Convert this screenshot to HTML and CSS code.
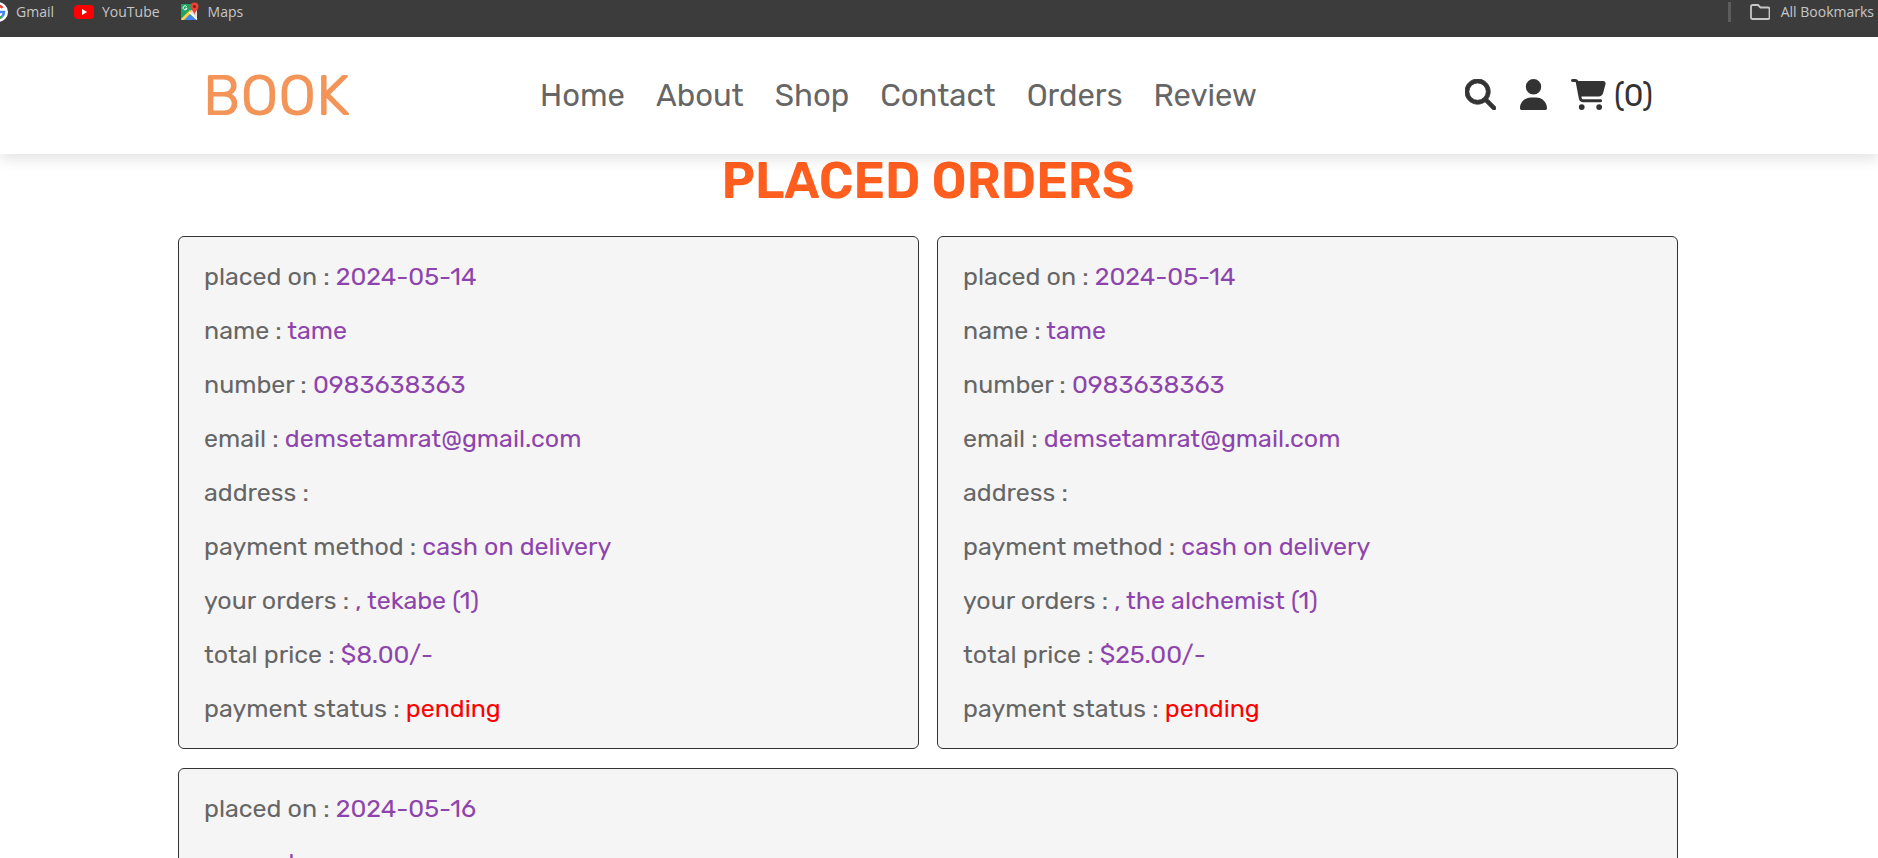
FILE: index.html
```html
<!DOCTYPE html>
<html lang="en">
<head>
<meta charset="utf-8">
<title>Orders</title>
<link rel="stylesheet" href="styles.css">
</head>
<body>
<nav class="bookmarks" aria-label="Bookmarks">
  <a class="bookmark" href="#">
    <svg class="bookmark-icon" viewBox="0 0 20 20" aria-hidden="true">
      <circle cx="10" cy="10" r="10" fill="#fff"/>
      <path d="M14.6 6A6.1 6.1 0 0 0 5 6.500" fill="none" stroke="#ea4335" stroke-width="2.600"/>
      <path d="M5 6.500a6.100 6.100 0 0 0 0 7" fill="none" stroke="#fbbc05" stroke-width="2.600"/>
      <path d="M5 13.500a6.100 6.100 0 0 0 9 1" fill="none" stroke="#34a853" stroke-width="2.600"/>
      <path d="M10 10h6a6 6 0 0 1-2 4.500" fill="none" stroke="#4285f4" stroke-width="2.600"/>
    </svg>
    <span>Gmail</span>
  </a>
  <a class="bookmark" href="#">
    <svg class="bookmark-icon" viewBox="0 0 20 20" aria-hidden="true">
      <rect y="3" width="20" height="14" rx="4" fill="#f00"/>
      <path d="M8 7l5.200 3L8 13z" fill="#fff"/>
    </svg>
    <span>YouTube</span>
  </a>
  <a class="bookmark" href="#">
    <svg class="bookmark-icon" viewBox="0 0 20 20" aria-hidden="true">
      <rect x="1" y="2" width="16" height="16" rx="1" fill="#1fa463"/>
      <path d="M9 10l8-6v13.500z" fill="#e3e3e3"/>
      <path d="M3 18l6-6 7 6z" fill="#4285f4"/>
      <path d="M1 17L10 8l2 2-8 8H2q-1 0-1-1z" fill="#ffd04b"/>
      <path d="M9.500 10.500l7.500 7" stroke="#fff" stroke-width="1.500"/>
      <path d="M14.500 13C14 9 10.500 8 10.500 4.500a4 4 0 0 1 8 0C18.500 8 15 9 14.500 13z" fill="#ea4335"/>
      <circle cx="14.500" cy="4.500" r="1.500" fill="#7b1f17"/>
      <path d="M6.700 4.700A2 2 0 1 0 7 6.300H5.300" fill="none" stroke="#fff"/>
    </svg>
    <span>Maps</span>
  </a>
  <a class="bookmark bookmark-all" href="#">
    <svg class="bookmark-icon" viewBox="0 0 20 20" fill="none" stroke="#c7c7c7" stroke-width="1.800" aria-hidden="true">
      <path d="M1 4.500a1.500 1.500 0 0 1 1.500-1.500H8l2.500 2.500h7.500A1.500 1.500 0 0 1 19.500 7v8.500A1.500 1.500 0 0 1 18 17H2.500A1.500 1.500 0 0 1 1 15.500z"/>
    </svg>
    <span>All Bookmarks</span>
  </a>
</nav>

<header class="header">
  <div class="header-inner">
    <a class="logo" href="#">BOOK</a>
    <nav class="navbar" aria-label="Main">
      <a href="#">Home</a>
      <a href="#">About</a>
      <a href="#">Shop</a>
      <a href="#">Contact</a>
      <a href="#">Orders</a>
      <a href="#">Review</a>
    </nav>
    <div class="icons">
      <a href="#" aria-label="Search"><svg class="icon icon-search" viewBox="0 0 512 512" aria-hidden="true"><path d="M416 208c0 45.900-14.900 88.300-40 122.700L502.600 457.400c12.500 12.500 12.500 32.800 0 45.300s-32.800 12.500-45.300 0L330.700 376c-34.400 25.200-76.800 40-122.700 40C93.100 416 0 322.900 0 208S93.100 0 208 0S416 93.100 416 208zM208 352a144 144 0 1 0 0-288 144 144 0 1 0 0 288z"/></svg></a>
      <button type="button" aria-label="Account"><svg class="icon icon-user" viewBox="0 0 448 512" aria-hidden="true"><path d="M224 256A128 128 0 1 0 224 0a128 128 0 1 0 0 256zm-45.700 48C79.800 304 0 383.800 0 482.300C0 498.700 13.300 512 29.700 512H418.300c16.400 0 29.700-13.300 29.700-29.700C448 383.800 368.200 304 269.700 304H178.300z"/></svg></button>
      <a href="#" aria-label="Cart"><svg class="icon icon-cart" viewBox="0 0 576 512" aria-hidden="true"><path d="M0 24C0 10.700 10.700 0 24 0H69.500c22 0 41.500 12.800 50.600 32h411c26.300 0 45.500 25 38.600 50.400l-41 152.300c-8.500 31.400-37 53.300-69.500 53.300H170.700l5.400 28.500c2.200 11.300 12.100 19.500 23.600 19.500H488c13.300 0 24 10.700 24 24s-10.700 24-24 24H199.700c-34.600 0-64.300-24.600-70.700-58.500L77.400 54.500c-.7-3.800-4-6.500-7.900-6.500H24C10.700 48 0 37.300 0 24zM128 464a48 48 0 1 1 96 0 48 48 0 1 1-96 0zm336-48a48 48 0 1 1 0 96 48 48 0 1 1 0-96z"/></svg><span>(0)</span></a>
    </div>
  </div>
</header>

<main class="orders">
  <h1 class="title">PLACED ORDERS</h1>
  <div class="order-list">
    <article class="order">
      <p>placed on : <span>2024-05-14</span></p>
      <p>name : <span>tame</span></p>
      <p>number : <span>0983638363</span></p>
      <p>email : <span>demsetamrat@gmail.com</span></p>
      <p>address : </p>
      <p>payment method : <span>cash on delivery</span></p>
      <p>your orders : <span>, tekabe (1)</span></p>
      <p>total price : <span>$8.00/-</span></p>
      <p>payment status : <span class="pending">pending</span></p>
    </article>
    <article class="order">
      <p>placed on : <span>2024-05-14</span></p>
      <p>name : <span>tame</span></p>
      <p>number : <span>0983638363</span></p>
      <p>email : <span>demsetamrat@gmail.com</span></p>
      <p>address : </p>
      <p>payment method : <span>cash on delivery</span></p>
      <p>your orders : <span>, the alchemist (1)</span></p>
      <p>total price : <span>$25.00/-</span></p>
      <p>payment status : <span class="pending">pending</span></p>
    </article>
    <article class="order order-wide">
      <p>placed on : <span>2024-05-16</span></p>
      <p>name : <span>tame</span></p>
    </article>
  </div>
</main>
</body>
</html>
```
FILE: styles.css
```css
* {
  box-sizing: border-box;
  margin: 0;
  padding: 0;
}

html {
  overflow: hidden;
}

body {
  height: 100vh;
  overflow: hidden;
  background: #fff;
  color: #666;
  font-family: Rubik, Inter, sans-serif;
  font-size: 25px;
}

a {
  color: inherit;
  text-decoration: none;
}

button {
  border: 0;
  background: none;
  color: inherit;
  font: inherit;
  cursor: pointer;
}

.bookmarks {
  display: flex;
  align-items: flex-start;
  gap: 20px;
  height: 37px;
  padding-right: 4px;
  background: #3c3c3c;
  color: #c7c7c7;
  font-family: "Segoe UI", "Open Sans", sans-serif;
  font-size: 14px;
  line-height: 24px;
}

.bookmark {
  display: flex;
  align-items: center;
  gap: 8px;
}

.bookmark:first-child {
  margin-left: -12px;
}

.bookmark-icon {
  width: 20px;
  height: 20px;
}

.bookmark-all {
  gap: 11px;
  margin-left: auto;
}

.bookmark-all::before {
  content: "";
  width: 3px;
  height: 20px;
  margin-right: 8px;
  background: #5c5c5c;
}

.header {
  position: relative;
  z-index: 1;
  padding-right: 22px;
  background: #fff;
  box-shadow: 0 6px 12px rgba(0, 0, 0, 0.1);
}

.header-inner {
  display: flex;
  align-items: center;
  justify-content: space-between;
  max-width: 1500px;
  height: 117px;
  margin: 0 auto;
  padding: 0 25px;
}

.logo {
  color: #f39459;
  font-size: 56px;
}

.navbar {
  display: flex;
  gap: 31px;
  margin-left: 6px;
  font-size: 31px;
}

.icons {
  display: flex;
  align-items: center;
  color: #333;
  font-size: 31px;
}

.icons > * {
  display: flex;
  align-items: center;
  gap: 8px;
  margin-left: 24px;
}

.icon {
  width: 31px;
  height: 31px;
  margin-bottom: 2px;
  fill: currentColor;
}

.icon-search {
  stroke: currentColor;
  stroke-width: 14px;
}

.icon-user {
  width: 27px;
}

.icon-cart {
  width: 35px;
}

.orders {
  max-width: 1522px;
  margin: 0 auto;
  padding-right: 22px;
}

.title {
  padding-bottom: 27px;
  color: #ff5e1f;
  font-size: 50px;
  font-weight: 600;
  line-height: 55px;
  text-align: center;
}

.order-list {
  display: grid;
  grid-template-columns: 1fr 1fr;
  gap: 19px 18px;
}

.order {
  padding: 13px 25px 12px;
  border: 1px solid #333;
  border-radius: 6px;
  background: #f5f5f5;
}

.order-wide {
  grid-column: 1 / -1;
}

.order p {
  line-height: 54px;
}

.order span {
  color: #8e44ad;
}

.order .pending {
  color: #f00;
}
```
